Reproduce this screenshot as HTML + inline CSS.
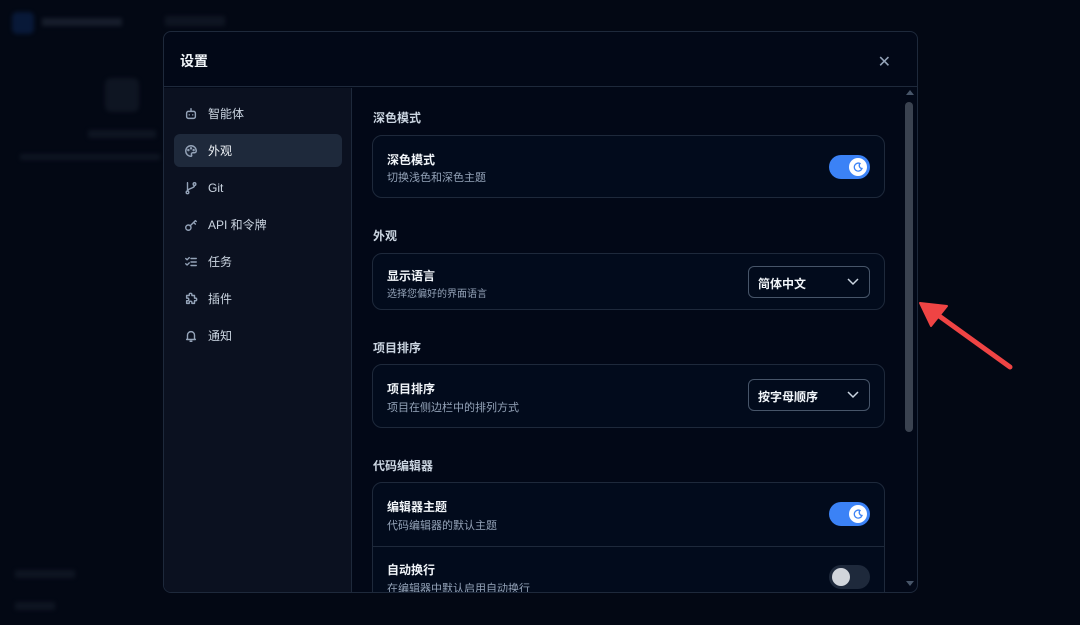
<!DOCTYPE html>
<html><head><meta charset="utf-8"><style>
*{box-sizing:border-box;margin:0;padding:0}
body{width:1080px;height:625px;background:#030814;font-family:"Liberation Sans","Noto Sans CJK SC",sans-serif;position:relative;overflow:hidden;color:#e5e7eb}
.blur{position:absolute;filter:blur(2px);opacity:.5}
.modal{position:absolute;left:163px;top:31px;width:755px;height:562px;background:#020817;border:1px solid #1e293b;border-radius:8px;overflow:hidden}
.hdr{height:55px;border-bottom:1px solid #1e293b;position:relative}
.hdr h1{position:absolute;left:16px;top:19px;font-size:14px;font-weight:bold;color:#f1f5f9}
.close{position:absolute;right:26px;top:20px;color:#94a3b8;font-size:16px}
.side{position:absolute;left:0;top:56px;width:188px;bottom:0;background:#0b1120;border-right:1px solid #1e293b}
.item{position:absolute;left:10px;width:168px;height:33px;border-radius:6px;font-size:12px;color:#cbd5e1;display:flex;align-items:center;padding-left:10px}
.item svg{width:14px;height:14px;margin-right:10px;stroke:#94a3b8;fill:none;stroke-width:1.6;stroke-linecap:round;stroke-linejoin:round}
.item.act{background:#1e293b;color:#f1f5f9}
.sec{position:absolute;left:209px;font-size:12px;color:#cbd5e1;font-weight:bold}
.card{position:absolute;left:208px;width:513px;border:1px solid #1e293b;border-radius:10px;background:#020b1c}
.t{position:absolute;left:14px;font-size:12px;color:#f1f5f9;font-weight:bold}
.d{position:absolute;left:14px;font-size:11px;color:#94a3b8}
.tog{position:absolute;right:14px;width:41px;height:24px;border-radius:12px;background:#3b82f6}
.tog .k{position:absolute;right:3px;top:3px;width:18px;height:18px;border-radius:50%;background:#fff}
.tog.off{background:#1e293b}.tog.off .k{left:3px;right:auto;background:#d1d5db}
.sel{position:absolute;right:14px;width:122px;height:32px;border:1px solid #475569;border-radius:6px;background:#020b1c;font-size:12px;font-weight:bold;color:#f1f5f9;padding:8px 0 0 9px}
.sel svg{position:absolute;right:10px;top:11px}
.sb{position:absolute;left:741px;top:70px;width:8px;height:330px;border-radius:4px;background:#3a4250}
</style></head><body>
<div class="blur" style="left:12px;top:12px;width:22px;height:22px;border-radius:5px;background:#0e2a5c"></div>
<div class="blur" style="left:42px;top:18px;width:80px;height:8px;background:#2a3242"></div>
<div class="blur" style="left:165px;top:16px;width:60px;height:10px;background:#1a2230"></div>
<div class="blur" style="left:105px;top:78px;width:34px;height:34px;border-radius:6px;background:#1a2230"></div>
<div class="blur" style="left:88px;top:130px;width:68px;height:8px;background:#1a2230"></div>
<div class="blur" style="left:20px;top:154px;width:140px;height:6px;background:#1a2230"></div>
<div class="blur" style="left:15px;top:570px;width:60px;height:8px;background:#1a2230"></div>
<div class="blur" style="left:15px;top:602px;width:40px;height:8px;background:#1a2230"></div>

<div class="modal">
 <div class="hdr"><h1>设置</h1><span class="close">✕</span></div>
 <div class="side">
  <div class="item" style="top:9px"><svg viewBox="0 0 16 16"><rect x="3" y="5" width="10" height="8" rx="2"/><path d="M8 5V2M6 9h0M10 9h0"/></svg>智能体</div>
  <div class="item act" style="top:46px"><svg viewBox="0 0 16 16"><path d="M8 2a6 6 0 1 0 0 12c1 0 1-1 .5-2S9 10 10 10h2a2 2 0 0 0 2-2 6 6 0 0 0-6-6z"/><circle cx="5" cy="7" r=".6"/><circle cx="8" cy="5" r=".6"/><circle cx="11" cy="7" r=".6"/></svg>外观</div>
  <div class="item" style="top:83px"><svg viewBox="0 0 16 16"><circle cx="4" cy="13" r="1.5"/><circle cx="12" cy="3.5" r="1.5"/><path d="M4 2v9.5M12 5c0 4-8 3-8 6.5"/></svg>Git</div>
  <div class="item" style="top:120px"><svg viewBox="0 0 16 16"><circle cx="5" cy="11" r="3"/><path d="M7 9l6-6M11 5l2 2M13 3l1 1"/></svg>API 和令牌</div>
  <div class="item" style="top:157px"><svg viewBox="0 0 16 16"><path d="M2 4l1.5 1.5L6 3M2 10l1.5 1.5L6 9M8 4h6M8 8h6M8 12h6"/></svg>任务</div>
  <div class="item" style="top:194px"><svg viewBox="0 0 16 16"><path d="M6 3a1.5 1.5 0 0 1 3 0v1h3v3h1a1.5 1.5 0 0 1 0 3h-1v3H9v-1a1.5 1.5 0 0 0-3 0v1H3v-3h1a1.5 1.5 0 0 0 0-3H3V4h3z"/></svg>插件</div>
  <div class="item" style="top:231px"><svg viewBox="0 0 16 16"><path d="M4 11V7a4 4 0 0 1 8 0v4l1 1H3zM7 14h2"/></svg>通知</div>
 </div>
 <div class="sec" style="top:77px">深色模式</div>
 <div class="card" style="top:103px;height:63px"><div class="t" style="top:15px">深色模式</div><div class="d" style="top:33px">切换浅色和深色主题</div><div class="tog" style="top:19px"><div class="k"><svg width="18" height="18" viewBox="0 0 18 18"><path d="M11 5.5a4 4 0 1 0 2 5 3 3 0 0 1-2-5z" fill="none" stroke="#3b82f6" stroke-width="1.3"/></svg></div></div></div>
 <div class="sec" style="top:195px">外观</div>
 <div class="card" style="top:221px;height:57px"><div class="t" style="top:13px">显示语言</div><div class="d" style="top:31px;font-size:10px">选择您偏好的界面语言</div><div class="sel" style="top:12px">简体中文<svg width="12" height="8" viewBox="0 0 12 8"><path d="M1 1l5 5 5-5" fill="none" stroke="#cbd5e1" stroke-width="1.5"/></svg></div></div>
 <div class="sec" style="top:307px">项目排序</div>
 <div class="card" style="top:332px;height:64px"><div class="t" style="top:15px">项目排序</div><div class="d" style="top:34px">项目在侧边栏中的排列方式</div><div class="sel" style="top:14px">按字母顺序<svg width="12" height="8" viewBox="0 0 12 8"><path d="M1 1l5 5 5-5" fill="none" stroke="#cbd5e1" stroke-width="1.5"/></svg></div></div>
 <div class="sec" style="top:425px">代码编辑器</div>
 <div class="card" style="top:450px;height:140px">
  <div class="t" style="top:15px">编辑器主题</div><div class="d" style="top:34px">代码编辑器的默认主题</div><div class="tog" style="top:19px"><div class="k"><svg width="18" height="18" viewBox="0 0 18 18"><path d="M11 5.5a4 4 0 1 0 2 5 3 3 0 0 1-2-5z" fill="none" stroke="#3b82f6" stroke-width="1.3"/></svg></div></div>
  <div style="position:absolute;left:0;right:0;top:63px;border-top:1px solid #1e293b"></div>
  <div class="t" style="top:78px">自动换行</div><div class="d" style="top:97px">在编辑器中默认启用自动换行</div><div class="tog off" style="top:82px"><div class="k"></div></div>
 </div>
 <div style="position:absolute;left:742px;top:58px;width:0;height:0;border:4px solid transparent;border-bottom:5px solid #475569;border-top:0"></div>
 <div class="sb"></div>
 <div style="position:absolute;left:742px;top:549px;width:0;height:0;border:4px solid transparent;border-top:5px solid #475569;border-bottom:0"></div>
</div>
<svg style="position:absolute;left:0;top:0" width="1080" height="625"><path d="M1010 367L935 313" stroke="#ef4444" stroke-width="5" stroke-linecap="round"/><path d="M920 303L947 306L931 326Z" fill="#ef4444" stroke="#ef4444" stroke-width="2" stroke-linejoin="round"/></svg>
</body></html>
